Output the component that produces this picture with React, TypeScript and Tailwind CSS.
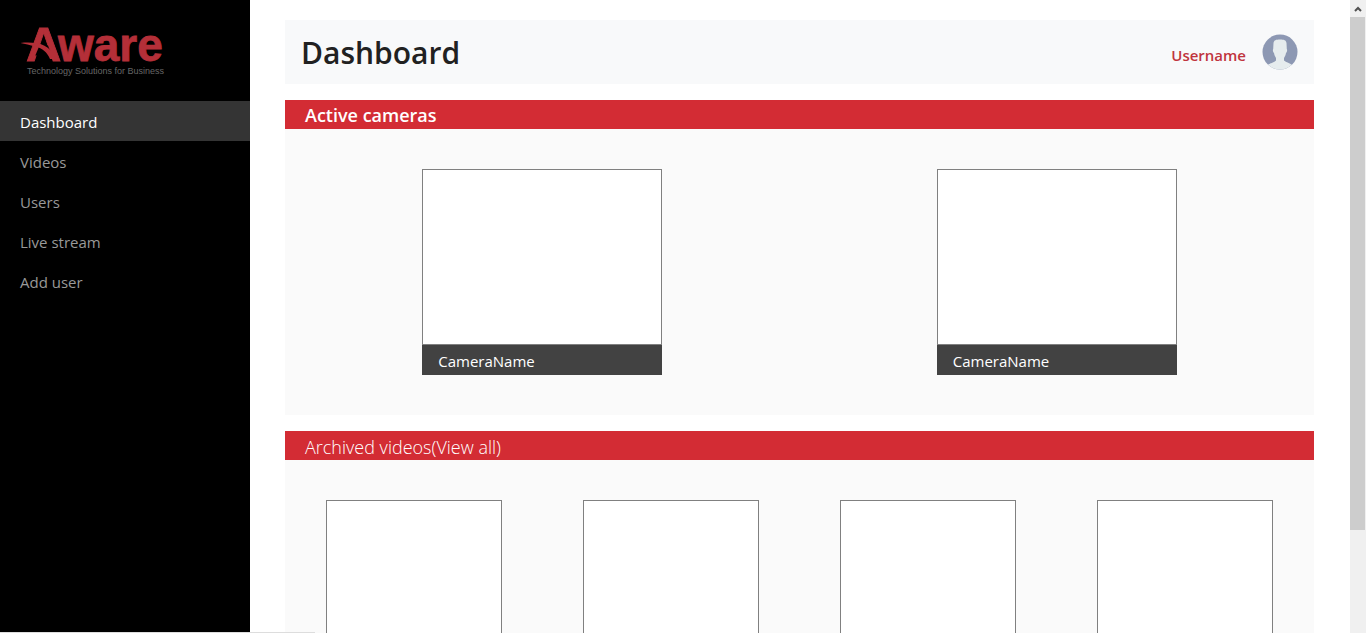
const navItems = ["Dashboard", "Videos", "Users", "Live stream", "Add user"];

function Logo() {
  return (
    <svg viewBox="0 0 150 60" className="block h-[60px] w-[150px] overflow-visible" role="img" aria-label="Aware">
      <g fontFamily="'Liberation Sans', Arial, sans-serif">
        <text y="41" fontSize="46" fontWeight="700" fill="#b42f38" stroke="#b42f38" strokeWidth="0.8">
          <tspan x="6" fontSize="49">A</tspan><tspan x="38">ware</tspan>
        </text>
        <text x="7" y="54" fontSize="9" fill="#666666">Technology Solutions for Business</text>
      </g>
      <path d="M19.500 25.500 L27.900 25.500 L32.100 35.500 L15.300 35.500 Z" fill="#000" />
      <path d="M0.500 23 C8 22 18 22.500 24 25.500 C29 28 32 31 34 35 L35 39 L30 39 C27 32 23 28.500 15 26.500 C10 25 5 24 0.500 23 Z" fill="#b42f38" />
    </svg>
  );
}

function Avatar() {
  return (
    <svg viewBox="0 0 36 36" className="size-9" aria-hidden="true">
      <defs>
        <clipPath id="avatar-clip"><circle cx="18" cy="18" r="17.5" /></clipPath>
      </defs>
      <g clipPath="url(#avatar-clip)">
        <rect width="36" height="36" fill="#8d98b3" />
        <path d="M11.500 9 C12 6 14 5.500 18 5.500 C22 5.500 24 6 24.500 9 L24.800 15 C25.500 16 25 18 24 19 C23.600 21 23 22.500 22 24 L22 26.500 C24 28.500 28 29 31 31.500 L31 36 L5 36 L5 31.500 C8 29 12 28.500 14 26.500 L14 24 C13 22.500 12.400 21 12 19 C11 18 10.500 16 11.200 15 Z" fill="#e6ecee" />
      </g>
    </svg>
  );
}

function Scrollbar() {
  return (
    <div aria-hidden="true" className="flex w-[17px] shrink-0 flex-col border-l border-white bg-[#f0f0f0]">
      <div className="flex h-[17px] shrink-0 items-center justify-center">
        <svg viewBox="0 0 8 6" className="h-1.5 w-2"><path d="M1 5 L4 2 L7 5" fill="none" stroke="#505050" strokeWidth="2" /></svg>
      </div>
      <div className="mr-px h-[81%] bg-[#cdcdcd]" />
    </div>
  );
}

export default function App() {
  return (
    <div className="relative flex h-screen overflow-hidden bg-white font-['Open_Sans','Noto_Sans',sans-serif] text-[#212529]">
      <aside className="w-[250px] shrink-0 bg-black">
        <div className="px-5 pt-5 pb-[21px]"><Logo /></div>
        <nav>
          {navItems.map((item, i) => (
            <a
              key={item}
              href="#"
              aria-current={i === 0 ? "page" : undefined}
              className={i === 0
                ? "block bg-[#343434] px-5 pt-[9px] pb-[7px] text-[15px] leading-6 text-white"
                : "block px-5 pt-[9px] pb-[7px] text-[15px] leading-6 text-[#999999]"}
            >
              {item}
            </a>
          ))}
        </nav>
      </aside>

      <main className="min-w-0 flex-1 overflow-hidden px-[35px] pt-5">
        <header className="flex h-16 items-center justify-between bg-[#f8f9fa] px-4">
          <h1 className="pt-0.5 text-[30px] leading-10 font-semibold text-[#212121]">Dashboard</h1>
          <div className="flex items-center gap-4">
            <a href="#" className="pt-1.5 text-[15px] leading-6 font-semibold text-[#c0343d]">Username</a>
            <Avatar />
          </div>
        </header>

        <section className="mt-4 bg-[#fafafa]">
          <h2 className="h-[29px] bg-[#d32c34] px-5 text-lg leading-[30px] font-semibold text-white">Active cameras</h2>
          <div className="grid grid-cols-2 justify-items-center py-10">
            {[0, 1].map((n) => (
              <article key={n} className="w-60">
                <div className="h-44 border border-[#808080] bg-white" />
                <p className="h-[30px] bg-[#424242] px-4 text-[15px] leading-8 text-white">CameraName</p>
              </article>
            ))}
          </div>
        </section>

        <section className="mt-4 bg-[#fafafa]">
          <h2 className="h-[29px] bg-[#d32c34] px-5 text-lg leading-8 font-light text-white">
            Archived videos<a href="#">(View all)</a>
          </h2>
          <div className="grid grid-cols-4 justify-items-center py-10">
            {[0, 1, 2, 3].map((n) => (
              <article key={n} className="h-44 w-44 border border-[#808080] bg-white" />
            ))}
          </div>
        </section>
      </main>

      <Scrollbar />
      <div aria-hidden="true" className="absolute bottom-0 left-0 h-px w-[315px] bg-[#dddddd]" />
    </div>
  );
}
